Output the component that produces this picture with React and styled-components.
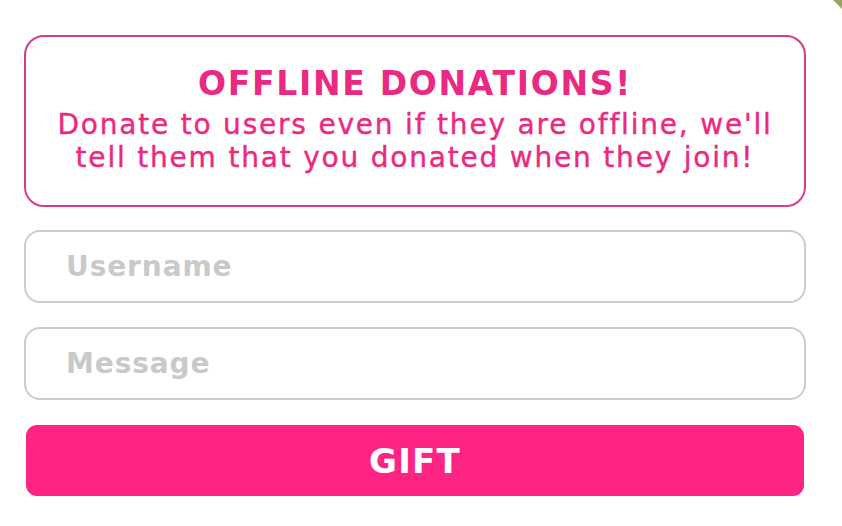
import styled, { createGlobalStyle } from "styled-components";

const GlobalStyle = createGlobalStyle`
    html, body {
        margin: 0;
        padding: 0;
        background: #ffffff;
        font-family: "DejaVu Sans", "Liberation Sans", sans-serif;
    }
`

const Page = styled.div`
    position: relative;
    width: 842px;
    height: 526px;
    overflow: hidden;
    background: #ffffff;
`

const Form = styled.div`
    width: 782px;
    padding: 35px 0 0 24px;
    display: flex;
    flex-direction: column;
`

const Notice = styled.div`
    box-sizing: border-box;
    height: 172px;
    border: 2px solid #d83a8e;
    border-radius: 20px;
    display: flex;
    flex-direction: column;
    align-items: center;
    justify-content: center;
    text-align: center;
    color: #ea2a82;
    padding-bottom: 2px;
`

const Title = styled.h1`
    margin: 0 0 6px;
    font-size: 33px;
    font-weight: 700;
    line-height: 36px;
    letter-spacing: 1.7px;
`

const Body = styled.p`
    margin: 0;
    font-size: 28px;
    font-weight: 400;
    line-height: 33px;
    letter-spacing: 1.8px;
    white-space: nowrap;
    -webkit-text-stroke: 0.4px #ea2a82;
`

const Field = styled.input`
    box-sizing: border-box;
    margin-top: ${p => p.$gap}px;
    height: 73px;
    width: 100%;
    border: 2px solid #cccccc;
    border-radius: 16px;
    padding: 0 0 0 40px;
    font-family: inherit;
    font-size: 28px;
    font-weight: 700;
    letter-spacing: 0.9px;
    color: #444;
    outline: none;
    background: #fff;

    &::placeholder {
        color: #c9c9c9;
    }
`

const GiftButton = styled.button`
    margin: 25px 2px 0;
    height: 71px;
    border: none;
    border-radius: 11px;
    background: #fe2483;
    color: #ffffff;
    font-family: inherit;
    font-size: 34px;
    font-weight: 700;
    letter-spacing: 1.2px;
    cursor: pointer;
`

const CornerMark = styled.svg`
    position: absolute;
    top: 0;
    right: 0;
`

export default function App() {
    return (
        <>
            <GlobalStyle />
            <Page>
                <CornerMark width="12" height="12" viewBox="0 0 12 12">
                    <path d="M12 0 L12 9 L3 0 Z" fill="#9aa36a" />
                </CornerMark>
                <Form>
                    <Notice>
                        <Title>OFFLINE DONATIONS!</Title>
                        <Body>
                            Donate to users even if they are offline, we'll<br />
                            tell them that you donated when they join!
                        </Body>
                    </Notice>
                    <Field $gap={23} placeholder="Username" />
                    <Field $gap={24} placeholder="Message" />
                    <GiftButton>GIFT</GiftButton>
                </Form>
            </Page>
        </>
    )
}
